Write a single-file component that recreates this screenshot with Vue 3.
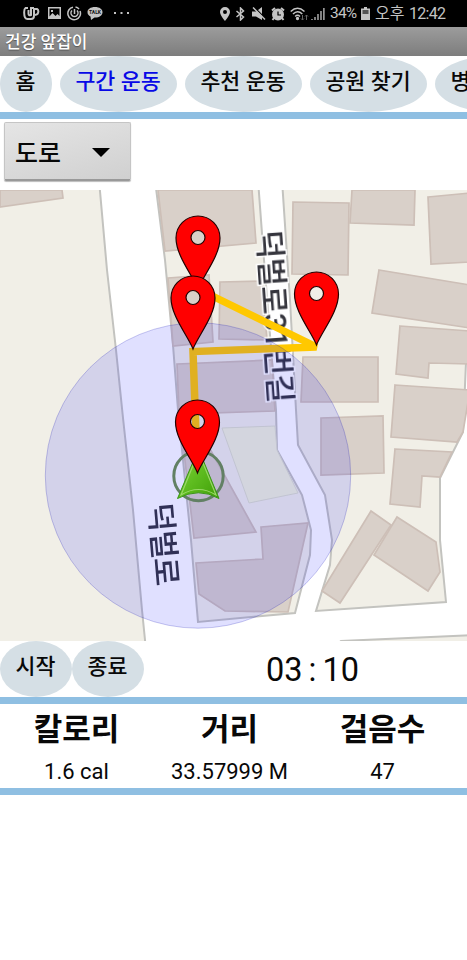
<script setup>
const tabs = ['홈', '구간 운동', '추천 운동', '공원 찾기', '병원 찾기']
const stats = [
  { label: '칼로리', value: '1.6 cal' },
  { label: '거리', value: '33.57999 M' },
  { label: '걸음수', value: '47' },
]
const buildings = [
  '0,190 62,190 63,198 0,207',
  '158,190 252,190 256,243 165,251',
  '293,202 349,203 348,275 292,274',
  '352,190 415,190 414,225 350,223',
  '428,197 470,193 470,262 431,264',
  '379,270 470,285 470,328 372,313',
  '400,326 470,331 470,364 429,363 428,378 396,374',
  '395,385 470,390 463,432 457,442 391,437',
  '395,449 452,452 440,477 422,476 420,507 390,504',
  '303,357 378,357 378,402 301,402',
  '321,418 383,416 384,473 321,475',
  '371,511 391,525 340,603 322,591',
  '397,517 436,542 440,572 428,591 374,555',
  '168,278 209,275 213,342 173,346',
  '220,282 262,281 267,340 219,339',
  '177,364 272,360 275,411 179,414',
  '182,435 205,440 256,532 194,538',
  '261,527 308,523 288,612 225,611 199,594 196,563 263,559',
]
const pins = [[198, 289], [193, 349], [316.5, 345], [197.5, 473]]
</script>

<template>
  <main class="screen">
    <header class="status">
      <div class="notices">
        <svg width="17" height="15" viewBox="0 0 17 15" fill="none" stroke="#c4c4c4" stroke-width="2">
          <path d="M5 2H2.500Q1 3 1.200 7Q1.200 13 4.500 13H8Q11 13 11 10V3H14Q16 4 15 7Q14.500 9 11 9M5.500 4V8Q6 10 8 9V2H11" />
        </svg>
        <svg width="14" height="13" viewBox="0 0 14 13">
          <path fill="#c4c4c4" fill-rule="evenodd" d="M0 0h13v12H0zM1.500 1.500v8L4.500 6l3 3 2-2 2 2V1.500zM3 3h2v2H3z" />
        </svg>
        <svg width="15" height="15" viewBox="0 0 15 15" fill="none" stroke="#c4c4c4" stroke-width="1.500">
          <path d="M6 1.200A6.300 6.300 0 1 0 13 5M8.500 1A6.300 6.300 0 0 1 12 3M5 4.500A3.500 3.500 0 1 0 10 4.500M7.500 3V8" />
        </svg>
        <svg width="16" height="15" viewBox="0 0 16 15">
          <path fill="#c4c4c4" d="M8 1C3.500 1 .5 3.200.5 6.200c0 2 1.300 3.500 3 4.400L4 14l3.500-2.500H8c4.500 0 7.500-2.300 7.500-5.300S12.500 1 8 1z" />
          <text x="8" y="8.300" text-anchor="middle" font-size="5" font-weight="bold" fill="#111">TALK</text>
        </svg>
        <svg class="dots" width="16" height="3" viewBox="0 0 16 3" fill="#c4c4c4"><path d="M0 0h2v2H0zM6.500 0h2v2h-2zM13 0h2v2h-2z" /></svg>
      </div>
      <div class="system">
        <svg width="10" height="14" viewBox="0 0 10 14"><path fill="#c4c4c4" fill-rule="evenodd" d="M5 0a5 5 0 0 0-5 5c0 3 5 9 5 9s5-6 5-9a5 5 0 0 0-5-5zm0 3a2 2 0 1 1 0 4 2 2 0 0 1 0-4z" /></svg>
        <svg class="bt" width="9" height="14" viewBox="0 0 9 14" fill="none" stroke="#c4c4c4" stroke-width="1.500"><path d="M.5 4l7 6L4.500 13V1l3 3-7 6" /></svg>
        <svg class="mute" width="14" height="14" viewBox="0 0 14 14"><path fill="#c4c4c4" d="M0 4.500h4L10 0v13L4 9.500H0z" /><path d="M2 0l12 12" stroke="#000" stroke-width="1.300" /><path d="M1 .5l12 12" stroke="#c4c4c4" stroke-width="1.500" /></svg>
        <svg class="alarm" width="14" height="14" viewBox="0 0 14 14" fill="none" stroke="#c4c4c4" stroke-width="2"><circle cx="7" cy="7.500" r="5" fill="#c4c4c4" /><path d="M1 3.500L4 1M10 1l3 2.500M3 11l-1.500 2M11 11l1.500 2" /><path d="M7 4.500V8h3" stroke="#000" stroke-width="1.200" /></svg>
        <svg class="wifi" width="19" height="14" viewBox="0 0 19 14" fill="none" stroke="#c4c4c4" stroke-width="1.500"><path d="M.7 4.500Q7.500-2 14.500 4.500M3 7Q7.500 2.500 12.300 7M5.200 9.500Q7.500 7 10 9.500" /><circle cx="7.500" cy="11.500" r=".9" fill="#c4c4c4" /><path d="M12.500 8v5M11 11.500l1.500 1.500 1.500-1.500M16.500 13V8M15 9.500L16.500 8 18 9.500" stroke="#666" stroke-width="1" /></svg>
        <svg class="signal" width="14" height="14" viewBox="0 0 14 14" stroke="#c4c4c4" stroke-width="1.300"><path d="M1 12v1M4 10v3M7 7v6M10 4v9M12.900 1v12" /></svg>
        <span class="percent">34%</span>
        <svg class="battery" width="9" height="13" viewBox="0 0 9 13"><path fill="#c4c4c4" d="M3 0h3v1.500h3V13H0V1.500h3z" /><path fill="#555" d="M1.500 3h6v4h-6z" /></svg>
        <span class="ampm">오후</span><span class="clock">12:42</span>
      </div>
    </header>
    <div class="title">건강 앞잡이</div>
    <nav class="tabs">
      <button v-for="(tab, i) in tabs" :key="tab" class="oval" :class="{ active: i === 1, home: i === 0 }">{{ tab }}</button>
    </nav>
    <div class="rule"></div>
    <div class="filter">
      <button class="spinner">도로<svg width="18" height="9" viewBox="0 0 18 9"><path d="M0 0H18L9 9z" /></svg></button>
    </div>
    <svg class="map" width="467" height="451" viewBox="0 190 467 451">
      <defs>
        <linearGradient id="arrow" x1="0" y1="0" x2="1" y2="1">
          <stop offset="0" stop-color="#8fd443" /><stop offset=".5" stop-color="#5fbd20" /><stop offset="1" stop-color="#3f9e08" />
        </linearGradient>
        <filter id="soft" x="-5%" y="-5%" width="110%" height="110%"><feGaussianBlur stdDeviation=".75" /></filter>
      </defs>
      <rect y="190" width="467" height="451" fill="#f1efe7" />
      <g filter="url(#soft)">
        <path fill="#fff" stroke="#c3c3bf" stroke-width="2" d="M99 180L107 270L116 350L123 418L133 510L142 610L146 650H330L341 641L475 635V350L466 362L463 432L440 478V540L446 602L316 611L330 565L332 540L325 495L298 445L296 410L290 300L282 180H258L264 260L276 410L277 450L302 495L311 530L310 555L295 613L198 622L191 540L185 480L178 410L173 345L165 260L155 180Z" />
        <path d="M222 428L275 426L277 450L298 493L249 503Z" fill="#f0f3d9" stroke="#dcdfcb" />
        <g fill="#d9d0c9" stroke="#cdbfb7" stroke-width="1.700">
          <polygon v-for="points in buildings" :key="points" :points="points" />
        </g>
      </g>
      <g class="road-name" filter="url(#soft)">
        <text transform="translate(149 504) rotate(85)" textLength="83">덕벌로</text>
        <text transform="translate(258 231) rotate(86)" textLength="173">덕벌로31번길</text>
      </g>
      <path d="M198 289L316.500 347L193 351.500L197.500 473" fill="none" stroke="#ffc800" stroke-width="7.500" />
      <circle cx="198" cy="475.500" r="152.700" fill="#1010ff21" stroke="#0000b050" stroke-width=".7" />
      <circle cx="198.500" cy="476" r="24.700" fill="none" stroke="#628064" stroke-width="3" />
      <path d="M198.500 449L219 498.500Q198.500 487 177.500 498.500Z" fill="url(#arrow)" stroke="#399615" stroke-width="1" />
      <path d="M198.500 452L181 495Q198.500 484 216 495Z" fill="none" stroke="#9bd86a" stroke-width="1.100" />
      <g v-for="([x, y], i) in pins" :key="i" :transform="`translate(${x} ${y})`">
        <path fill="#f00" stroke="#240000" stroke-width="1.200" fill-rule="evenodd" d="M0 0C-5-13-22-33-22-51A22 22 0 0 1 22-51C22-33 5-13 0 0ZM7-51.500A7 7 0 1 0-7-51.500A7 7 0 1 0 7-51.500Z" />
      </g>
    </svg>
    <section class="controls">
      <button class="oval">시작</button><button class="oval">종료</button>
      <div class="timer"><span>03</span><span>:</span><span>10</span></div>
    </section>
    <div class="rule"></div>
    <section class="stats">
      <div v-for="stat in stats" :key="stat.label" class="stat"><b>{{ stat.label }}</b><span>{{ stat.value }}</span></div>
    </section>
    <div class="rule"></div>
  </main>
</template>

<style>
body { margin: 0; background: #fff; }
</style>

<style scoped>
.screen { width: 467px; height: 960px; overflow: hidden; background: #fff; color: #080808; font-family: Roboto, "Noto Sans CJK KR", sans-serif; }
button { border: 0; padding: 0; color: inherit; font-family: inherit; white-space: pre; }
svg { display: block; flex: none; }
.status { box-sizing: border-box; height: 27px; display: flex; justify-content: space-between; background: #000; color: #c4c4c4; padding: 0 21px 0 23px; }
.notices, .system { display: flex; align-items: center; }
.notices { gap: 7px; }
.notices svg:nth-child(1) { margin-right: 1px; }
.notices svg:nth-child(3) { margin-left: -2px; }
.notices svg:nth-child(4) { margin-left: -2px; }
.dots { margin-left: 4px; }
.bt { margin-left: 6px; }
.mute { margin-left: 7px; }
.alarm { margin-left: 5px; }
.wifi { margin-left: 5px; }
.signal { margin-left: 2px; }
.percent { width: 27px; margin-left: 5px; font-size: 15.500px; letter-spacing: -.8px; line-height: 27px; }
.battery { margin-left: 4px; }
.ampm { width: 30px; margin-left: 5px; font-size: 16px; line-height: 26px; }
.clock { width: 37px; margin-left: 4px; font-size: 16px; letter-spacing: -.7px; line-height: 27px; white-space: nowrap; }
.title { height: 29px; box-sizing: border-box; padding-left: 5px; line-height: 30px; font-size: 17px; color: #fff; font-weight: 500; background: linear-gradient(#9c9c9c, #7d7d7d); text-shadow: 0 1px 1px #555; }
.tabs { display: flex; gap: 8px; height: 56px; overflow: hidden; }
.oval { width: 117px; height: 56px; flex: none; border-radius: 50%; background: #d5dfe5; font-size: 21.700px; line-height: 30px; padding-bottom: 5px; padding-right: 1px; font-weight: 500; }
.home { width: 52px; }
.active { color: #0808e6; }
.rule { height: 7px; background: #8fbfe2; }
.filter { height: 71px; box-sizing: border-box; padding: 3px 0 0 4px; }
.spinner { display: flex; align-items: center; justify-content: space-between; width: 127px; height: 59px; box-sizing: border-box; padding: 0 20px 0 10px; font-size: 25px; border-radius: 2px; background: linear-gradient(165deg, #e5e5e5, #d0d0d0); border: 1px solid #c5c5c5; border-bottom: 2px solid #999; box-shadow: 0 1px 1px #bbb; font-weight: 500; }
.spinner svg { margin-top: 3px; }
.map { overflow: hidden; }
.road-name { fill: #34343c; stroke: #fff; stroke-width: 3; paint-order: stroke; font-size: 31px; font-weight: 500; }
.controls { height: 56px; display: flex; }
.controls .oval { width: 72px; }
.timer { box-sizing: border-box; flex: 1; display: flex; align-items: center; justify-content: center; gap: 6px; padding: 1px 0 0 14px; font-size: 32.500px; height: 56px; }
.stats { height: 84px; display: grid; grid-template-columns: repeat(3, 1fr); padding: 0 8px 0 0; box-sizing: border-box; }
.stat { display: flex; flex-direction: column; align-items: center; }
.stat b { height: 51px; line-height: 52px; font-size: 31px; }
.stat span { line-height: 34px; font-size: 22px; white-space: nowrap; }
</style>
